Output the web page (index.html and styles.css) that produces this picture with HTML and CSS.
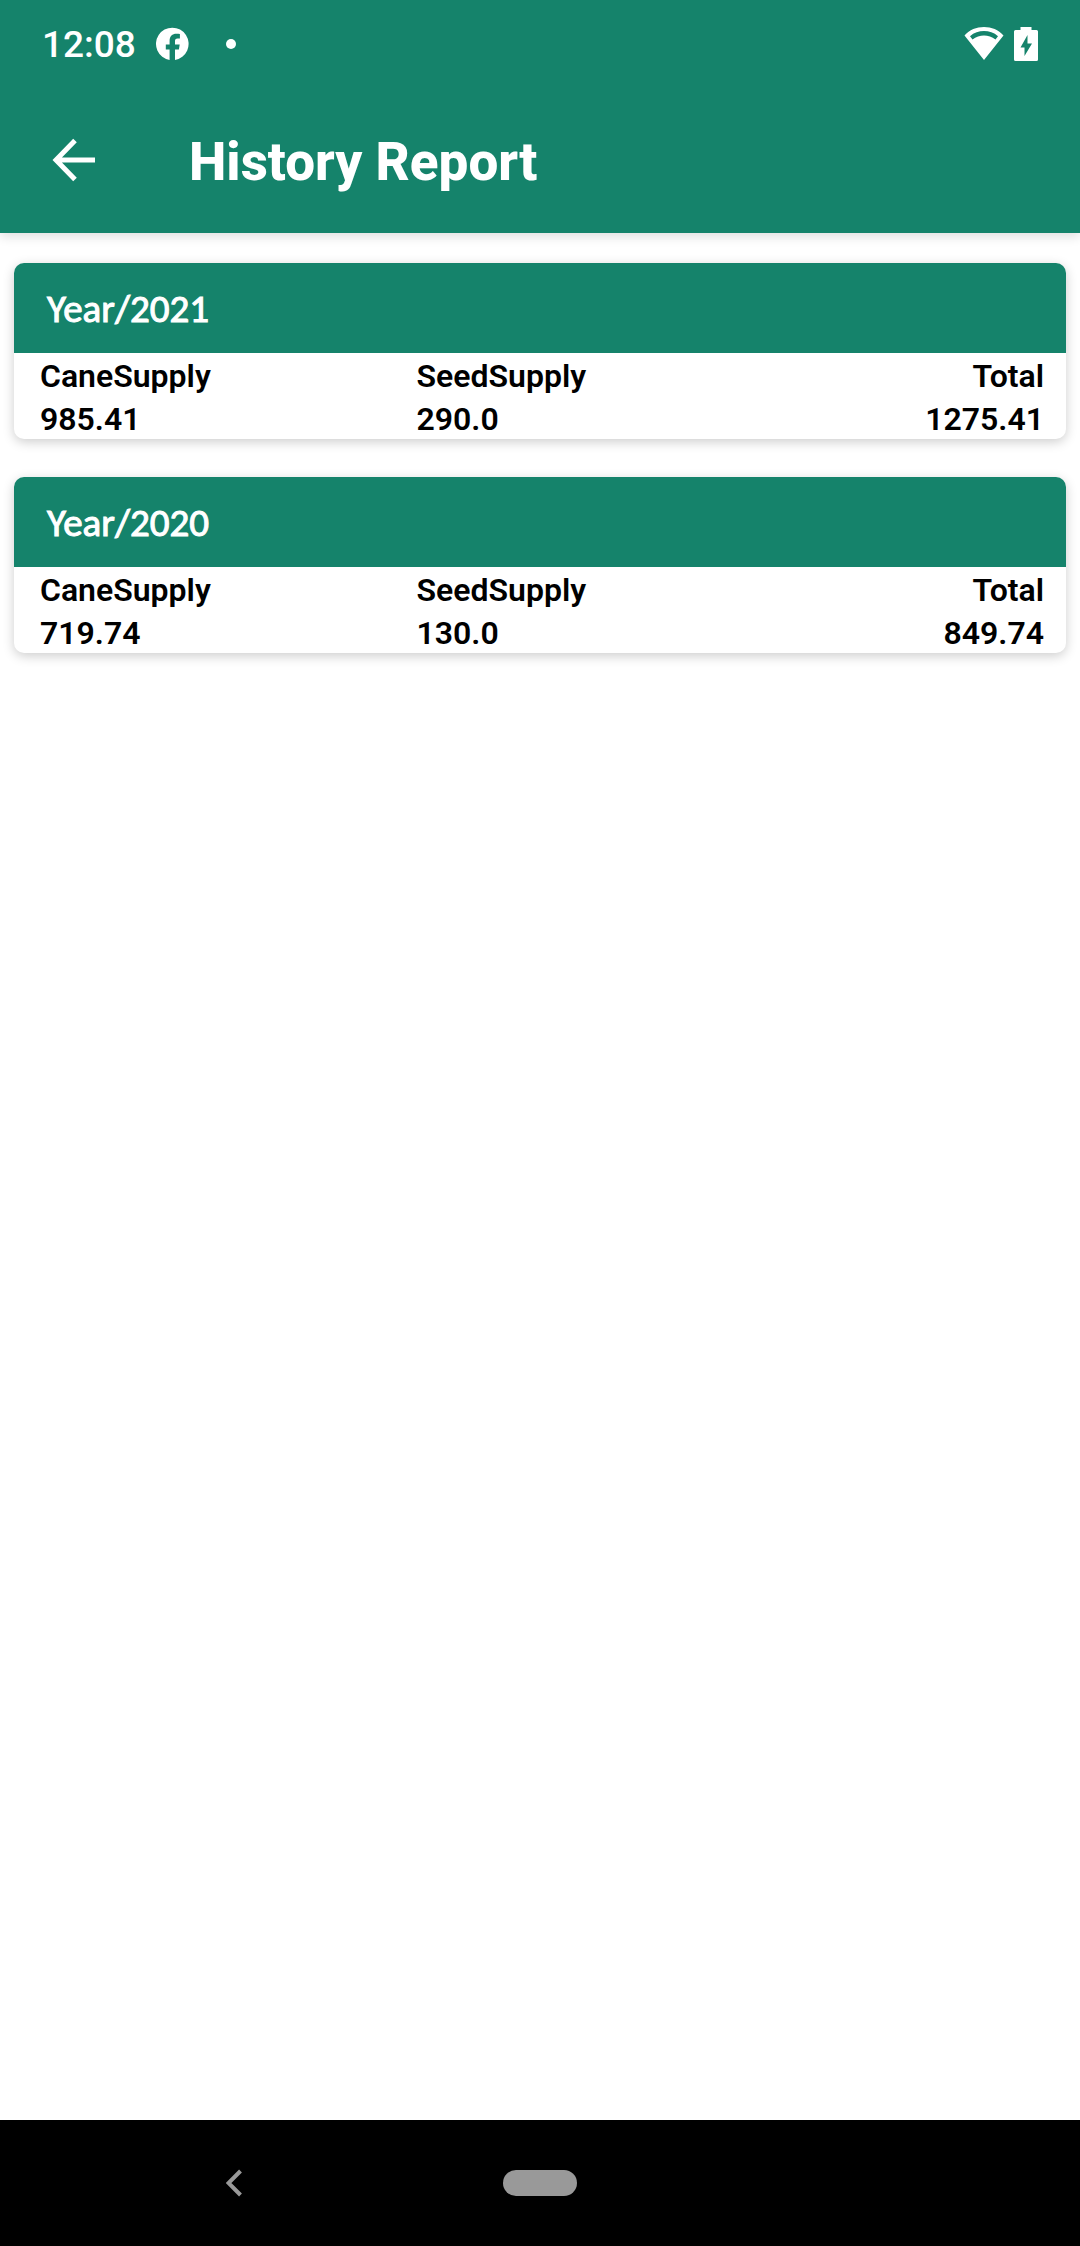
FILE: index.html
```html
<!DOCTYPE html>
<html lang="en">
<head>
  <meta charset="UTF-8" />
  <meta name="viewport" content="width=device-width, initial-scale=1.0"/>
  <title>History Report</title>
  <link rel="stylesheet" href="styles.css">
</head>
<body>

<header class="top">
  <div class="status-bar">
    <span class="clock">12:08</span>
    <svg class="fb-icon" viewBox="0 0 34 34" aria-hidden="true">
      <path fill="#fff" d="M13.6 33V22.6H9.8v-5h3.8V14c0-4.8 2.7-7.2 6.8-7.2 1.4 0 2.7.1 3.5.3v4.3h-2.3c-2 0-2.6 1-2.6 2.5v3.7h4.7l-.8 5H19V33A16.3 16.3 0 1 0 13.6 33z"/>
    </svg>
    <span class="more-dot"></span>
    <div class="status-right">
      <svg class="wifi-icon" viewBox="0 0 40 34" aria-hidden="true">
        <path fill="#fff" fill-rule="evenodd" d="M20 0C12.5 0 5.5 2.8.5 8.5L20 33 39.5 8.5C34.5 2.8 27.5 0 20 0zM6 9.2C14 2.4 26 2.4 34 9.2L31.5 12.5C24.5 7 15.5 7 8.5 12.5z"/>
      </svg>
      <svg class="battery-icon" viewBox="0 0 24 34" aria-hidden="true">
        <path fill="#fff" fill-rule="evenodd" d="M6.5 0h11v3h5q1.5 0 1.5 1.5v28q0 1.5-1.5 1.5h-21Q0 34 0 32.5v-28Q0 3 1.5 3h5zM13.5 8L6.5 20.5h4V29L18 16.5h-4.5z"/>
      </svg>
    </div>
  </div>

  <div class="toolbar">
    <button class="back-btn" type="button" aria-label="Back">
      <svg viewBox="0 0 44 44" aria-hidden="true">
        <path fill="none" stroke="#fff" stroke-width="5" d="M43 22H5M23 2.5L4 22l19 19.5"/>
      </svg>
    </button>
    <h1>History Report</h1>
  </div>
</header>

<main class="report">
  <section class="card">
    <h2>Year/2021</h2>
    <div class="card-body">
      <table>
        <thead>
          <tr><th>CaneSupply</th><th>SeedSupply</th><th>Total</th></tr>
        </thead>
        <tbody>
          <tr><td>985.41</td><td>290.0</td><td>1275.41</td></tr>
        </tbody>
      </table>
    </div>
  </section>

  <section class="card">
    <h2>Year/2020</h2>
    <div class="card-body">
      <table>
        <thead>
          <tr><th>CaneSupply</th><th>SeedSupply</th><th>Total</th></tr>
        </thead>
        <tbody>
          <tr><td>719.74</td><td>130.0</td><td>849.74</td></tr>
        </tbody>
      </table>
    </div>
  </section>
</main>

<nav class="nav-bar">
  <button class="nav-back" type="button" aria-label="Navigate back">
    <svg viewBox="0 0 16 28" aria-hidden="true">
      <path fill="none" stroke="#999" stroke-width="4" d="M14.5 2L2.5 14l12 12"/>
    </svg>
  </button>
  <button class="nav-home" type="button" aria-label="Home"></button>
</nav>

</body>
</html>
```

FILE: styles.css
```css
* { box-sizing: border-box; }

body {
  font-family: Roboto, sans-serif;
  background: #fff;
  color: #000;
  margin: 0;
  display: flex;
  flex-direction: column;
  min-height: 100vh;
}

svg { display: block; }

button {
  border: none;
  background: none;
  padding: 0;
  cursor: pointer;
}

.top {
  background: #15836b;
  color: #fff;
  box-shadow: 0 4px 10px rgba(0, 0, 0, 0.12);
}

.status-bar {
  display: flex;
  align-items: center;
  height: 88px;
  padding: 0 42px;
}

.clock {
  font-size: 37px;
  font-weight: 500;
}

.fb-icon {
  width: 34px;
  height: 34px;
  margin-left: 20px;
}

.more-dot {
  width: 10px;
  height: 10px;
  margin-left: 36px;
  border-radius: 50%;
  background: #fff;
}

.status-right {
  display: flex;
  gap: 10px;
  margin-left: auto;
}

.wifi-icon {
  width: 40px;
  height: 34px;
}

.battery-icon {
  width: 24px;
  height: 34px;
}

.toolbar {
  display: flex;
  align-items: center;
  gap: 93px;
  height: 145px;
  padding: 0 52px 2px;
}

.back-btn,
.back-btn svg {
  width: 44px;
  height: 44px;
}

h1 {
  margin: 0;
  padding-top: 4px;
  font-size: 53px;
  font-weight: 800;
}

.report {
  flex: 1;
  display: flex;
  flex-direction: column;
  gap: 38px;
  padding: 30px 14px;
}

.card {
  border-radius: 10px;
  background: #fff;
  overflow: hidden;
  box-shadow: 0 3px 12px rgba(0, 0, 0, 0.2);
}

.card h2 {
  margin: 0;
  padding: 2px 33px 0;
  background: #15836b;
  color: #fff;
  font-family: Carlito, Lato, sans-serif;
  font-size: 39px;
  font-weight: 400;
  line-height: 88px;
  -webkit-text-stroke: 1px #fff;
}

.card-body {
  padding: 0 22px 0 26px;
}

.card table {
  width: 100%;
  table-layout: fixed;
  border-collapse: collapse;
}

.card th,
.card td {
  padding: 3px 0 0;
  font-size: 32px;
  font-weight: 600;
  line-height: 40px;
  text-align: left;
}

.card th:first-child {
  width: 37.5%;
}

.card th:last-child,
.card td:last-child {
  text-align: right;
}

.nav-bar {
  display: grid;
  grid-template-columns: 1fr auto 1fr;
  align-items: center;
  height: 126px;
  background: #000;
}

.nav-back {
  justify-self: center;
  margin-right: 36px;
}

.nav-back svg {
  width: 16px;
  height: 28px;
}

.nav-home {
  width: 74px;
  height: 26px;
  border-radius: 13px;
  background: #999;
}
```
